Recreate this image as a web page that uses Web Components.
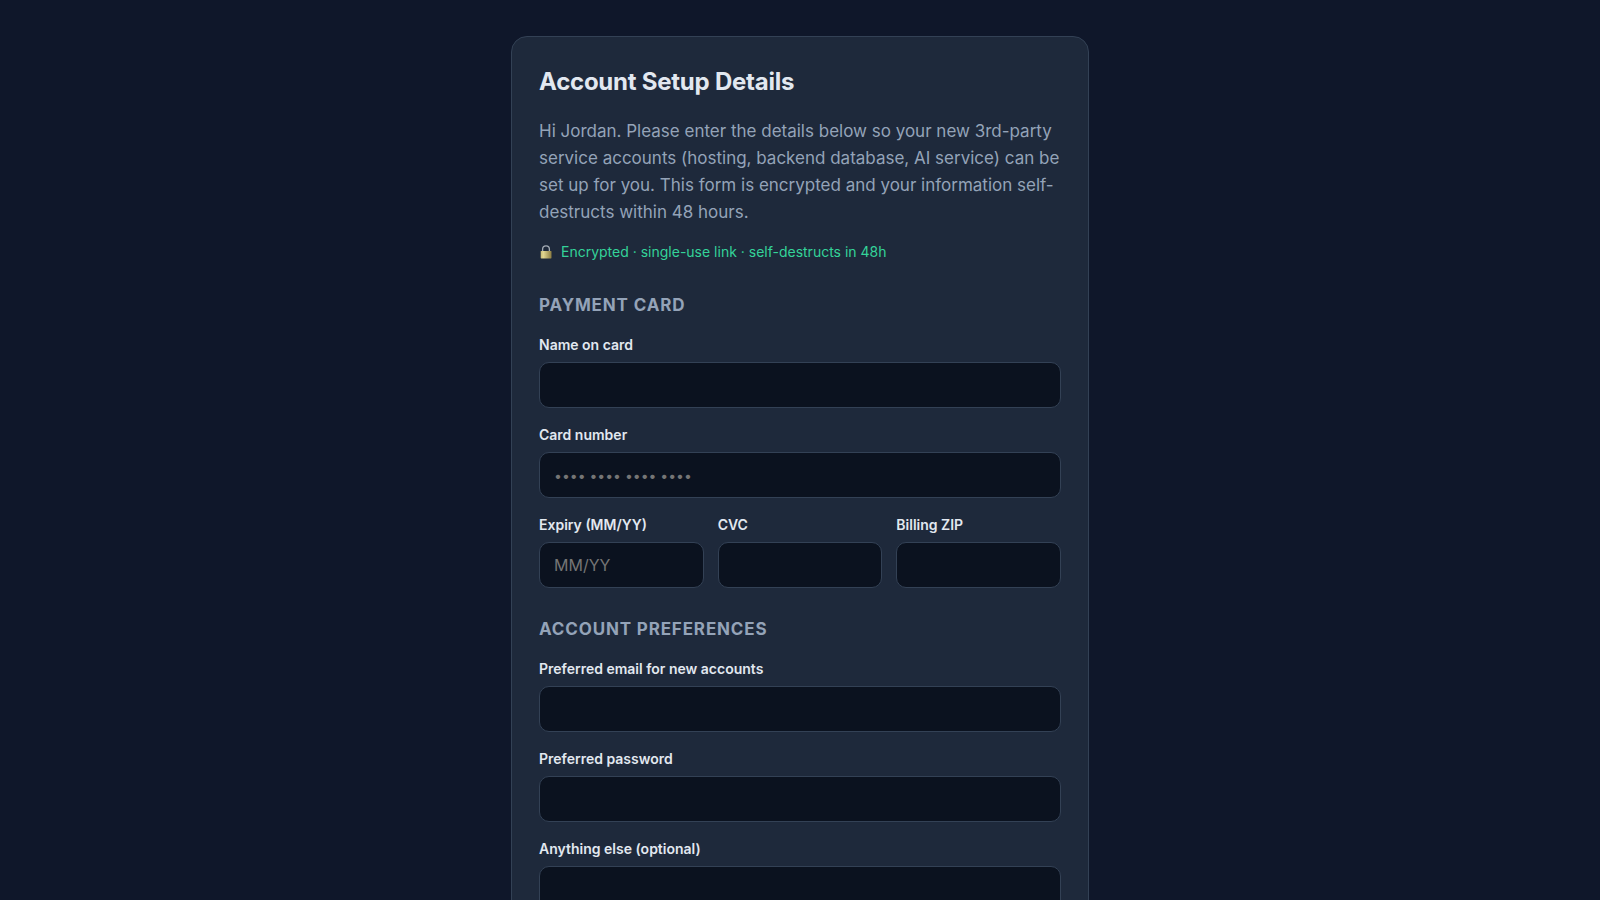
<!DOCTYPE html>
<html lang="en">
<head>
<meta charset="utf-8">
<meta name="viewport" content="width=device-width, initial-scale=1">
<title>Account Setup Details</title>
<style>
  :root {
    --page: #0f172a;
    --card: #1e293b;
    --line: #334155;
    --well: #0b121f;
    --text: #e2e8f0;
    --muted: #94a3b8;
    --ok: #34d399;
  }
  body {
    margin: 0;
    padding: 36px 16px;
    background: var(--page);
    color: var(--text);
    font: 17px/27px Inter, "Liberation Sans", sans-serif;
  }
</style>
</head>
<body>
<setup-card>
  <span slot="title">Account Setup Details</span>
  <span slot="intro">Hi Jordan. Please enter the details below so your new 3rd-party service accounts (hosting, backend database, AI service) can be set up for you. This form is encrypted and your information self-destructs within 48 hours.</span>
  <secure-note slot="note">Encrypted · single-use link · self-destructs in 48h</secure-note>
  <form-section heading="Payment card">
    <form-field label="Name on card" name="cardname"></form-field>
    <form-field class="digits" label="Card number" name="cardnumber" hint="•••• •••• •••• ••••"></form-field>
    <field-row>
      <form-field label="Expiry (MM/YY)" name="expiry" hint="MM/YY"></form-field>
      <form-field label="CVC" name="cvc"></form-field>
      <form-field label="Billing ZIP" name="zip"></form-field>
    </field-row>
  </form-section>
  <form-section heading="Account preferences">
    <form-field label="Preferred email for new accounts" name="email" type="email"></form-field>
    <form-field label="Preferred password" name="password"></form-field>
    <form-field label="Anything else (optional)" name="notes" type="multiline"></form-field>
  </form-section>
</setup-card>
<script>
  const define = (name, html, setup) => {
    const template = document.createElement('template');
    template.innerHTML = html;
    customElements.define(name, class extends HTMLElement {
      constructor() {
        super();
        this.attachShadow({ mode: 'open' }).append(template.content.cloneNode(true));
      }
      connectedCallback() {
        if (setup) setup(this, this.shadowRoot);
      }
    });
  };

  define('setup-card', `
    <style>
      :host { display: block; max-width: 578px; box-sizing: border-box; margin: 0 auto;
        padding: 27px; background: var(--card); border: 1px solid var(--line); border-radius: 16px; }
      h1 { margin: 0 0 18px; font-size: 24px; line-height: 36px; font-weight: 700; letter-spacing: -0.01em; }
      p { margin: 0 0 14px; color: var(--muted); }
      form { margin: 0; }
    </style>
    <h1><slot name="title"></slot></h1>
    <p><slot name="intro"></slot></p>
    <slot name="note"></slot>
    <form><slot></slot></form>`);

  define('secure-note', `
    <style>
      :host { display: flex; align-items: center; gap: 8px; color: var(--ok); font-size: 14px; line-height: 24px; }
      svg { flex: none; width: 14px; height: 14px; }
    </style>
    <svg viewBox="0 0 14 14" aria-hidden="true">
      <defs><linearGradient id="brass"><stop offset="0" stop-color="#c9bd78"/><stop offset=".25" stop-color="#e0d590"/><stop offset="1" stop-color="#8c7d42"/></linearGradient></defs>
      <path d="M3.6 7V4.2a3.4 3.4 0 0 1 6.8 0V7" fill="none" stroke="#a3abb5" stroke-width="1.3"/>
      <rect x="1.7" y="6" width="10.8" height="7.4" rx=".6" fill="url(#brass)"/>
    </svg>
    <span><slot></slot></span>`);

  define('form-section', `
    <style>
      :host { display: block; margin-top: 28px; }
      h2 { margin: 0 0 15px; color: var(--muted); font-size: 17px; line-height: 27px; font-weight: 700;
        letter-spacing: 0.05em; text-transform: uppercase; }
      div { display: grid; gap: 16px; }
    </style>
    <h2></h2>
    <div><slot></slot></div>`,
    (host, root) => { root.querySelector('h2').textContent = host.getAttribute('heading'); });

  define('field-row', `
    <style>
      :host { display: grid; grid-template-columns: repeat(3, minmax(0, 1fr)); gap: 14px; }
    </style>
    <slot></slot>`);

  define('form-field', `
    <style>
      :host { display: block; }
      label { display: block; margin-bottom: 6px; font-size: 14px; line-height: 22px; font-weight: 600; }
      input, textarea { display: block; box-sizing: border-box; width: 100%; height: 46px; margin: 0; padding: 0 14px;
        color: var(--text); background: var(--well); border: 1px solid var(--line); border-radius: 10px;
        font: inherit; font-size: 16px; outline: none; }
      textarea { height: 96px; padding: 10px 14px; resize: vertical; }
      input:focus, textarea:focus { border-color: var(--ok); }
      ::placeholder { color: #757575; opacity: 1; }
      :host(.digits) input { font-size: 14px; }
    </style>
    <label for="control"></label>`,
    (host, root) => {
      const type = host.getAttribute('type') || 'text';
      root.querySelector('label').textContent = host.getAttribute('label');
      if (root.getElementById('control')) return;
      const control = document.createElement(type === 'multiline' ? 'textarea' : 'input');
      if (type !== 'multiline') control.type = type;
      control.id = 'control';
      control.name = host.getAttribute('name');
      if (host.hasAttribute('hint')) control.placeholder = host.getAttribute('hint');
      root.append(control);
    });
</script>
</body>
</html>
